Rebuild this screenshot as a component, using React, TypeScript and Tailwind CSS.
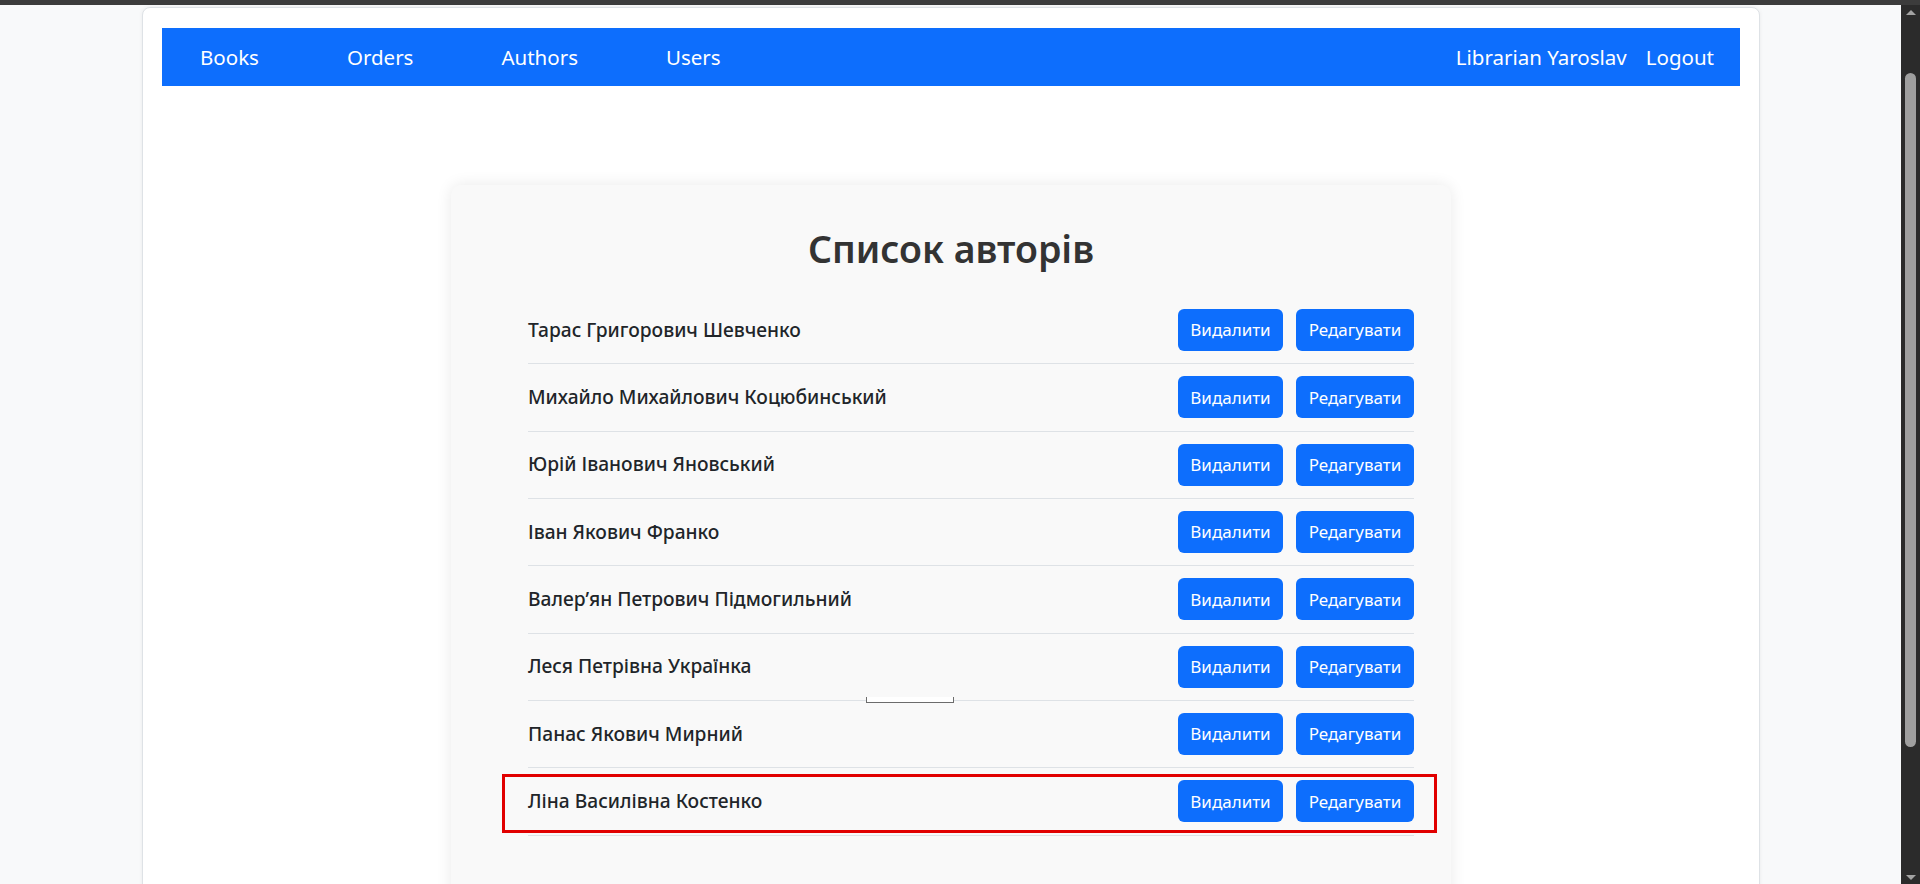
import React from 'react';

const authors: string[] = [
  'Тарас Григорович Шевченко',
  'Михайло Михайлович Коцюбинський',
  'Юрій Іванович Яновський',
  'Іван Якович Франко',
  'Валер’ян Петрович Підмогильний',
  'Леся Петрівна Українка',
  'Панас Якович Мирний',
  'Ліна Василівна Костенко',
];

const navLinks = ['Books', 'Orders', 'Authors', 'Users'];

const Scrollbar: React.FC = () => (
  <div className="w-[19px] shrink-0 bg-[#2b2b2b] flex flex-col items-center">
    <div className="h-[14px] flex items-center justify-center">
      <div className="w-0 h-0 border-x-[5px] border-x-transparent border-b-[5px] border-b-[#a3a3a3]" />
    </div>
    <div className="mt-[54px] w-[11px] h-[674px] rounded-full bg-[#9f9f9f]" />
    <div className="flex-1" />
    <div className="h-[14px] flex items-center justify-center">
      <div className="w-0 h-0 border-x-[5px] border-x-transparent border-t-[5px] border-t-[#a3a3a3]" />
    </div>
  </div>
);

const AuthorRow: React.FC<{ name: string; marked?: boolean }> = ({ name, marked }) => (
  <li className="relative h-[67.33px] border-b border-[#dee2e6] flex items-center justify-between">
    <span className="text-[19.2px] font-medium text-[#212529]">{name}</span>
    <div className="flex gap-[13px]">
      <button className="h-[42px] w-[105px] rounded-md bg-[#0d6efd] text-white text-[17px]">Видалити</button>
      <button className="h-[42px] w-[118px] rounded-md bg-[#0d6efd] text-white text-[17px]">Редагувати</button>
    </div>
    {marked && (
      <div className="absolute left-[-26px] right-[-23px] top-[6px] bottom-[2px] border-[3px] border-[#e10000] pointer-events-none" />
    )}
  </li>
);

const App: React.FC = () => {
  return (
    <div className="h-[884px] w-full overflow-hidden flex flex-col bg-[#f8f9fa]" style={{ fontFamily: '"Noto Sans", "Open Sans", sans-serif' }}>
      <div className="h-[5px] shrink-0 bg-[#3c3c3c]" />
      <div className="flex flex-1 min-h-0">
        <div className="flex-1 min-w-0 pl-[142px] pt-[2px]">
          <div className="w-[1618px] h-[900px] bg-white border border-[#dee2e6] rounded-lg shadow-[0_0_4px_rgba(0,0,0,0.06)] px-[19px] pt-[20px]">
            <nav className="h-[58px] bg-[#0d6efd] flex items-center justify-between pl-[38px] pr-[26px] text-white text-[20.5px]">
              <div className="flex gap-[88px]">
                {navLinks.map((l) => (
                  <a key={l} href="#">{l}</a>
                ))}
              </div>
              <div className="flex gap-[19px]">
                <span>Librarian Yaroslav</span>
                <a href="#">Logout</a>
              </div>
            </nav>
            <div className="relative w-[1000px] mx-auto mt-[99px] bg-[#f9f9f9] rounded-[10px] shadow-[0_0_16px_rgba(0,0,0,0.09)] pt-[40px] px-[37px] pb-[120px]">
              <h1 className="text-center text-[37.5px] leading-[48px] font-semibold text-[#333333] mb-[24px]">Список авторів</h1>
              <ul className="pl-[40px]">
                {authors.map((a, i) => (
                  <AuthorRow key={a} name={a} marked={i === authors.length - 1} />
                ))}
              </ul>
              <div className="absolute left-[415px] top-[512px] w-[88px] h-[6px] bg-white border-x border-b border-[#6c6c6c]" />
            </div>
          </div>
        </div>
        <Scrollbar />
      </div>
    </div>
  );
};

export default App;
